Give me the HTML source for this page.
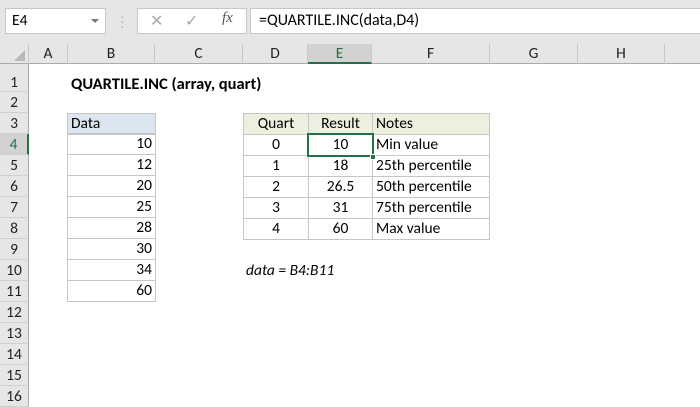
<!DOCTYPE html>
<html><head><style>
*{margin:0;padding:0;box-sizing:border-box}
body{width:700px;height:400px;overflow:hidden;background:#fff;font-family:Calibri,"Carlito","Liberation Sans",sans-serif;font-size:15.5px;color:#000;position:relative}
.a{position:absolute}
.tb{left:0;top:0;width:700px;height:44px;background:#e6e6e6}
.box{background:#fff;border:1px solid #c6c6c6}
.ch{top:44px;height:20px;background:#e6e6e6;border-bottom:1px solid #ababab;text-align:center;line-height:20px;color:#222;border-right:1px solid #c8c8c8;font-size:15.5px}
.rh{left:0;width:29px;background:#e6e6e6;border-right:1px solid #ababab;border-bottom:1px solid #d0d0d0;text-align:center;color:#222;font-size:15.5px}
.c{height:22px;line-height:20px;border:1px solid #c6c6c6;padding:0 3px;white-space:nowrap}
.t{position:absolute;height:22px;line-height:20px;border:1px solid #c6c6c6;padding:0 3px;white-space:nowrap}
.d{left:243px;width:66px;text-align:center}
.e{left:308px;width:65px;text-align:center}
.f{left:372px;width:118px}
</style></head><body>
<div class="a tb"></div>
<div class="a box" style="left:5px;top:8px;width:101px;height:26px;line-height:24px;padding-left:6px">E4</div>
<div class="a" style="left:91px;top:19px;width:0;height:0;border-left:4px solid transparent;border-right:4px solid transparent;border-top:4px solid #777"></div>
<div class="a" style="left:121px;top:14px;color:#999;font-size:10px;line-height:5px">·<br>·<br>·</div>
<div class="a box" style="left:137px;top:8px;width:110px;height:26px"></div>
<div class="a" style="left:150px;top:11px;color:#aaa;font-size:16px">✕</div>
<div class="a" style="left:185px;top:11px;color:#aaa;font-size:16px">✓</div>
<div class="a" style="left:222px;top:10px;color:#555;font-style:italic;font-family:'Liberation Serif',serif;font-size:15px">fx</div>
<div class="a box" style="left:250px;top:8px;width:460px;height:26px;line-height:24px;padding-left:8px;font-size:16px">=QUARTILE.INC(data,D4)</div>
<div class="a" style="left:0;top:44px;width:29px;height:20px;background:#e6e6e6;border-right:1px solid #c8c8c8;border-bottom:1px solid #ababab"></div>
<div class="a" style="left:14px;top:50px;width:0;height:0;border-left:11px solid transparent;border-bottom:11px solid #b8b8b8"></div>
<div class="a ch" style="left:29px;width:39px">A</div>
<div class="a ch" style="left:68px;width:87px">B</div>
<div class="a ch" style="left:155px;width:88px">C</div>
<div class="a ch" style="left:243px;width:65px">D</div>
<div class="a ch" style="left:308px;width:64px;background:#d2d2d2;border-bottom:2px solid #217346;color:#217346">E</div>
<div class="a ch" style="left:372px;width:118px">F</div>
<div class="a ch" style="left:490px;width:88px">G</div>
<div class="a ch" style="left:578px;width:87px">H</div>
<div class="a ch" style="left:665px;width:40px"></div>
<div class="a rh" style="top:64px;height:28px;line-height:38px">1</div>
<div class="a rh" style="top:92px;height:21px;line-height:21px">2</div>
<div class="a rh" style="top:113px;height:21px;line-height:21px">3</div>
<div class="a rh" style="top:134px;height:21px;line-height:21px;background:#d2d2d2;color:#217346;border-right:2px solid #217346">4</div>
<div class="a rh" style="top:155px;height:21px;line-height:21px">5</div>
<div class="a rh" style="top:176px;height:21px;line-height:21px">6</div>
<div class="a rh" style="top:197px;height:21px;line-height:21px">7</div>
<div class="a rh" style="top:218px;height:21px;line-height:21px">8</div>
<div class="a rh" style="top:239px;height:21px;line-height:21px">9</div>
<div class="a rh" style="top:260px;height:21px;line-height:21px">10</div>
<div class="a rh" style="top:281px;height:21px;line-height:21px">11</div>
<div class="a rh" style="top:302px;height:21px;line-height:21px">12</div>
<div class="a rh" style="top:323px;height:21px;line-height:21px">13</div>
<div class="a rh" style="top:344px;height:21px;line-height:21px">14</div>
<div class="a rh" style="top:365px;height:21px;line-height:21px">15</div>
<div class="a rh" style="top:386px;height:21px;line-height:21px">16</div>
<div class="a" style="left:71px;top:74px;font-weight:bold;font-size:16.5px">QUARTILE.INC (array, quart)</div>
<div class="a c" style="left:67px;top:113px;width:89px;background:#dce6f1">Data</div>
<div class="a" style="left:67px;top:133px;width:89px">
<div class="c" style="text-align:right;margin-top:0">10</div><div class="c" style="text-align:right;margin-top:-1px">12</div><div class="c" style="text-align:right;margin-top:-1px">20</div><div class="c" style="text-align:right;margin-top:-1px">25</div><div class="c" style="text-align:right;margin-top:-1px">28</div><div class="c" style="text-align:right;margin-top:-1px">30</div><div class="c" style="text-align:right;margin-top:-1px">34</div><div class="c" style="text-align:right;margin-top:-1px">60</div>
</div>
<div class="t d" style="top:113px;background:#ebf1de">Quart</div><div class="t e" style="top:113px;background:#ebf1de">Result</div><div class="t f" style="top:113px;background:#ebf1de">Notes</div>
<div class="t d" style="top:134px">0</div><div class="t e" style="top:134px">10</div><div class="t f" style="top:134px">Min value</div>
<div class="t d" style="top:155px">1</div><div class="t e" style="top:155px">18</div><div class="t f" style="top:155px">25th percentile</div>
<div class="t d" style="top:176px">2</div><div class="t e" style="top:176px">26.5</div><div class="t f" style="top:176px">50th percentile</div>
<div class="t d" style="top:197px">3</div><div class="t e" style="top:197px">31</div><div class="t f" style="top:197px">75th percentile</div>
<div class="t d" style="top:218px">4</div><div class="t e" style="top:218px">60</div><div class="t f" style="top:218px">Max value</div>
<div class="a" style="left:307px;top:133px;width:67px;height:24px;border:2px solid #217346"></div>
<div class="a" style="left:370px;top:154px;width:6px;height:6px;background:#217346;border:1px solid #fff"></div>
<div class="a" style="left:246px;top:261px;font-style:italic">data = B4:B11</div>
</body></html>
